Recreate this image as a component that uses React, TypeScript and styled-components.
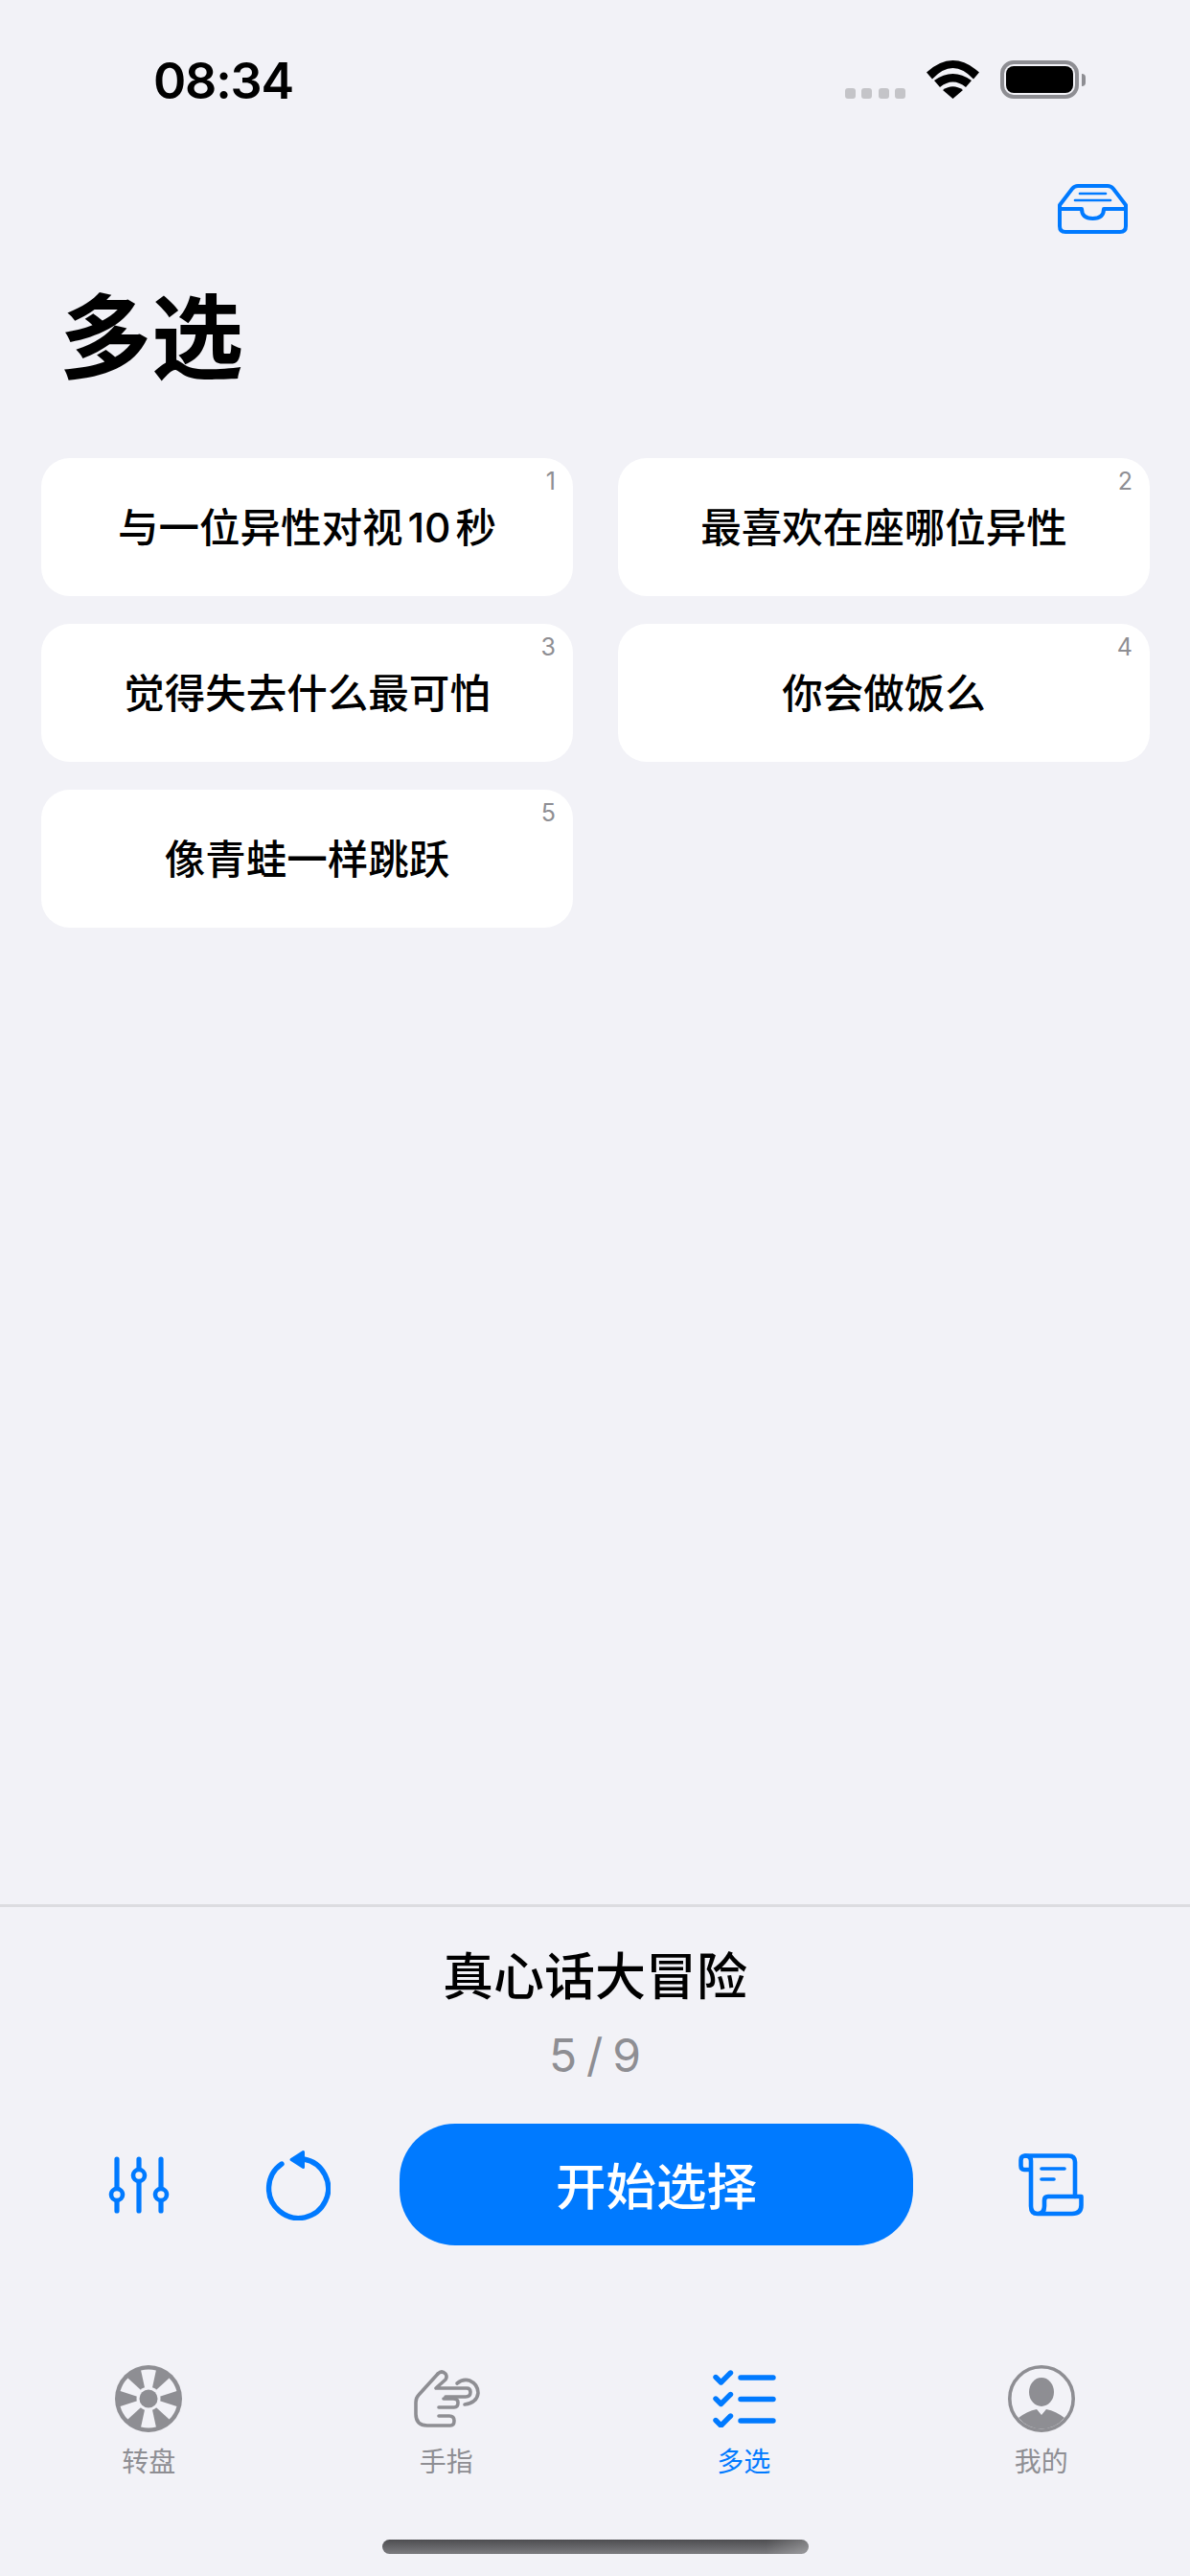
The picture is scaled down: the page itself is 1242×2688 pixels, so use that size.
import styled, { createGlobalStyle } from "styled-components"

const BLUE = "#007aff"
const GRAY = "#8e8e93"
const BG = "#f2f2f7"

const GlobalStyle = createGlobalStyle`
  html, body {
    margin: 0;
    padding: 0;
    background: ${BG};
  }
  * {
    box-sizing: border-box;
  }
`

// white wedges of the wheel, one every 60 degrees
function wedgePath(angle: number) {
  const cx = 35
  const cy = 35
  const point = (r: number, a: number) => {
    const rad = (a * Math.PI) / 180
    return `${(cx + r * Math.cos(rad)).toFixed(2)} ${(cy - r * Math.sin(rad)).toFixed(2)}`
  }
  return `M${point(12, angle - 19)} L${point(30.5, angle - 15)} A30.5 30.5 0 0 0 ${point(30.5, angle + 15)} L${point(12, angle + 19)} Z`
}

function WheelIcon() {
  return (
    <svg width="70" height="70" viewBox="0 0 70 70">
      <circle cx="35" cy="35" r="35" fill={GRAY} />
      {[90, 30, -30, -90, -150, 150].map((a) => (
        <path key={a} d={wedgePath(a)} fill={BG} />
      ))}
      <circle cx="35" cy="35" r="12.5" fill={BG} />
      <circle cx="35" cy="35" r="9.5" fill={GRAY} />
    </svg>
  )
}

function HandIcon() {
  return (
    <svg width="73" height="62" viewBox="10 11 73 62" fill="none" stroke={GRAY} strokeWidth="3.6" strokeLinecap="round" strokeLinejoin="round">
      <path d="M38 16 L18 38 Q15 41 15 46 V58 Q15 70 27 70 H51 Q55 70 55 65 Q55 60 50 60 H39" />
      <path d="M39 51 H55 Q59 51 59 46 Q59 42 54 42 H44" />
      <path d="M38 16 Q42 12 46 16 Q48 19 46 22 L36 31 H68 Q72 31 72 35 Q72 40 67 40 H46" />
      <path d="M58 26 Q64 21 71 23 Q80 27 80 36 Q79 46 66 48" />
    </svg>
  )
}

function ChecklistIcon() {
  return (
    <svg width="68" height="60" viewBox="-2 0 68 60" fill="none" stroke={BLUE} strokeWidth="5.4" strokeLinecap="round" strokeLinejoin="round">
      {[0, 22.5, 45].map((y) => (
        <g key={y} transform={`translate(0 ${y})`}>
          <path d="M3 7.5 L8.5 13 L18.5 3" />
          <path d="M29 8 H63" />
        </g>
      ))}
    </svg>
  )
}

function ProfileIcon() {
  return (
    <svg width="70" height="70" viewBox="0 0 70 70">
      <circle cx="35" cy="35" r="33.2" fill="none" stroke={GRAY} strokeWidth="3.6" />
      <ellipse cx="35" cy="28" rx="13" ry="15" fill={GRAY} />
      <path d="M11 55 Q20 48 30 46 L35 52 L40 46 Q50 48 59 55 A31 31 0 0 1 11 55 Z" fill={GRAY} />
    </svg>
  )
}

function InboxIcon() {
  return (
    <svg width="73" height="52" viewBox="0 0 73 52" fill="none" stroke={BLUE} strokeLinecap="round" strokeLinejoin="round">
      <g strokeWidth="4">
        <path d="M2 22 L15 5 Q17.5 2 21 2 H52 Q55.5 2 58 5 L71 22 V44 Q71 50 65 50 H8 Q2 50 2 44 Z" />
        <path d="M2 26 H25 Q25 36 36.5 36 Q48 36 48 26 H71" />
      </g>
      <g strokeWidth="2.6">
        <path d="M23 10 H50" />
        <path d="M18 17 H55" />
      </g>
    </svg>
  )
}

function WifiIcon() {
  return (
    <svg width="55" height="40" viewBox="0 0 55 40" fill="#000">
      <path d="M0 12.5 Q27.5 -12.5 55 12.5 L49 19.5 Q27.5 -3.5 6 19.5 Z" />
      <path d="M8 21 Q27.5 7 47 21 L41 28 Q27.5 17 14 28 Z" />
      <path d="M17 31 Q27.5 23.5 38 31 L27.5 40 Z" />
    </svg>
  )
}

function SlidersIcon() {
  return (
    <svg width="64" height="60" viewBox="0 0 64 60" fill="none" stroke={BLUE} strokeWidth="5.2" strokeLinecap="round">
      <path d="M9 3 V57 M32 3 V57 M55 3 V57" />
      <g fill={BG} strokeWidth="4.6">
        <circle cx="9" cy="40" r="6" />
        <circle cx="32" cy="20" r="6" />
        <circle cx="55" cy="40" r="6" />
      </g>
    </svg>
  )
}

function RestartIcon() {
  return (
    <svg width="68" height="74" viewBox="0 0 68 74" fill="none" stroke={BLUE} strokeWidth="5.4" strokeLinecap="round" strokeLinejoin="round">
      <path d="M17 15 A31 31 0 1 0 40 10" />
      <path d="M27 10.5 L39.5 2.5 V18.5 Z" fill={BLUE} strokeWidth="3" />
    </svg>
  )
}

function ScrollIcon() {
  return (
    <svg width="68" height="66" viewBox="0 0 68 66" fill="none" stroke={BLUE} strokeWidth="4.6" strokeLinecap="round" strokeLinejoin="round">
      <path d="M7 2.5 H52 Q59 2.5 59 9 V45" />
      <path d="M13 17 H6 Q2.5 17 2.5 13 V7 Q2.5 2.5 7 2.5 Q13 2.5 13 8 V55 Q13 63 20 63 Q27 63 27 55 V49 Q27 45 31 45 H65.5 V54 Q65.5 63 56 63 H20" />
      <path d="M24 16 H48" strokeWidth="3.6" />
      <path d="M24 27 H37" strokeWidth="3.6" />
    </svg>
  )
}

export default function App() {
  const choices = [
    { id: 1, text: <>与一位异性对视<Latin>10</Latin>秒</> },
    { id: 2, text: "最喜欢在座哪位异性" },
    { id: 3, text: "觉得失去什么最可怕" },
    { id: 4, text: "你会做饭么" },
    { id: 5, text: "像青蛙一样跳跃" },
  ]

  return (
    <Page>
      <GlobalStyle />

      <StatusBar>
        <Clock>08:34</Clock>
        <StatusIcons>
          <SignalDots>
            <Dot />
            <Dot />
            <Dot />
            <Dot />
          </SignalDots>
          <WifiIcon />
          <Battery>
            <BatteryBody>
              <BatteryFill />
            </BatteryBody>
            <BatteryTip />
          </Battery>
        </StatusIcons>
      </StatusBar>

      <Toolbar>
        <InboxIcon />
      </Toolbar>

      <Content>
        <Title>多选</Title>
        <ChoiceGrid>
          {choices.map((choice) => (
            <ChoiceCard key={choice.id}>
              <ChoiceIndex>{choice.id}</ChoiceIndex>
              <span>{choice.text}</span>
            </ChoiceCard>
          ))}
        </ChoiceGrid>
      </Content>

      <BottomPanel>
        <DeckName>真心话大冒险</DeckName>
        <DeckCount>5 / 9</DeckCount>

        <ActionRow>
          <ToolSlot>
            <SlidersIcon />
          </ToolSlot>
          <ToolSlot $before={100}>
            <RestartIcon />
          </ToolSlot>
          <StartButton>开始选择</StartButton>
          <ToolSlot>
            <ScrollIcon />
          </ToolSlot>
        </ActionRow>

        <TabBar>
          <Tab>
            <TabIcon>
              <WheelIcon />
            </TabIcon>
            <TabLabel>转盘</TabLabel>
          </Tab>
          <Tab>
            <TabIcon>
              <HandIcon />
            </TabIcon>
            <TabLabel>手指</TabLabel>
          </Tab>
          <Tab>
            <TabIcon>
              <ChecklistIcon />
            </TabIcon>
            <TabLabel $active>多选</TabLabel>
          </Tab>
          <Tab>
            <TabIcon>
              <ProfileIcon />
            </TabIcon>
            <TabLabel>我的</TabLabel>
          </Tab>
        </TabBar>

        <HomeIndicator />
      </BottomPanel>
    </Page>
  )
}

const Page = styled.div`
  width: 1242px;
  height: 2688px;
  display: flex;
  flex-direction: column;
  overflow: hidden;
  background: ${BG};
  color: #000;
  font-family: Inter, "Noto Sans CJK SC", sans-serif;
`

const StatusBar = styled.div`
  height: 130px;
  padding: 63px 109px 0 160px;
  display: flex;
  justify-content: space-between;
  align-items: flex-start;
`

const Clock = styled.div`
  font-size: 52px;
  line-height: 44px;
  font-weight: 600;
  letter-spacing: -1.2px;
`

const StatusIcons = styled.div`
  display: flex;
  align-items: flex-end;
  gap: 22px;
`

const SignalDots = styled.div`
  display: flex;
  gap: 6.5px;
`

const Dot = styled.span`
  width: 11px;
  height: 11px;
  border-radius: 3px;
  background: #c4c4c8;
`

const Battery = styled.div`
  display: flex;
  align-items: center;
  gap: 3px;
`

const BatteryBody = styled.div`
  width: 82px;
  height: 40px;
  padding: 2px;
  border: 4px solid ${GRAY};
  border-radius: 14px;
`

const BatteryFill = styled.div`
  width: 100%;
  height: 100%;
  border-radius: 8px;
  background: #000;
`

const BatteryTip = styled.div`
  width: 4px;
  height: 13px;
  border-radius: 0 4px 4px 0;
  background: ${GRAY};
`

const Toolbar = styled.div`
  padding: 62px 65px 0 0;
  height: 162px;
  display: flex;
  justify-content: flex-end;
  align-items: flex-start;
`

const Content = styled.div`
  flex: 1;
  padding-left: 43px;
`

const Title = styled.h1`
  margin: 0 0 66px 19px;
  font-size: 96px;
  line-height: 120px;
  font-weight: 700;
`

const ChoiceGrid = styled.div`
  display: grid;
  grid-template-columns: 555px 555px;
  grid-auto-rows: 144px;
  gap: 29px 47px;
`

const ChoiceCard = styled.div`
  position: relative;
  padding-bottom: 5px;
  display: flex;
  align-items: center;
  justify-content: center;
  border-radius: 30px;
  background: #fff;
  font-size: 42.5px;
  font-weight: 500;
`

const Latin = styled.span`
  margin: 0 5px;
`

const ChoiceIndex = styled.span`
  position: absolute;
  top: 6px;
  right: 18px;
  font-size: 25px;
  line-height: 36px;
  font-weight: 400;
  color: ${GRAY};
`

const BottomPanel = styled.div`
  height: 701px;
  padding-top: 43px;
  border-top: 3px solid #dcdce0;
  display: flex;
  flex-direction: column;
  align-items: center;
`

const DeckName = styled.div`
  font-size: 53px;
  line-height: 60px;
  font-weight: 500;
`

const DeckCount = styled.div`
  margin-top: 22px;
  font-size: 48px;
  line-height: 60px;
  font-weight: 400;
  word-spacing: -3.5px;
  color: ${GRAY};
`

const ActionRow = styled.div`
  width: 100%;
  margin-top: 41px;
  padding-left: 113px;
  display: flex;
  align-items: center;
`

const ToolSlot = styled.div<{ $before?: number }>`
  display: flex;
  margin-left: ${(p) => p.$before ?? 0}px;
`

const StartButton = styled.button`
  width: 536px;
  height: 127px;
  margin: 0 110px 0 72px;
  padding: 0 0 4px;
  border: none;
  border-radius: 58px;
  background: ${BLUE};
  color: #fff;
  font-family: inherit;
  font-size: 52.5px;
  font-weight: 500;
`

const TabBar = styled.div`
  width: 100%;
  margin-top: 125px;
  display: grid;
  grid-template-columns: repeat(4, 1fr);
`

const Tab = styled.div`
  display: flex;
  flex-direction: column;
  align-items: center;
`

const TabIcon = styled.div`
  height: 70px;
  display: flex;
  align-items: center;
  justify-content: center;
`

const TabLabel = styled.div<{ $active?: boolean }>`
  margin-top: 11px;
  font-size: 28px;
  line-height: 40px;
  color: ${(p) => (p.$active ? BLUE : GRAY)};
`

const HomeIndicator = styled.div`
  width: 445px;
  height: 15px;
  margin-top: 61px;
  border-radius: 8px;
  background:
    linear-gradient(90deg, transparent 90%, rgba(255, 255, 255, 0.25) 100%),
    linear-gradient(180deg, #4d4d50 0%, #7c7c80 100%);
`
